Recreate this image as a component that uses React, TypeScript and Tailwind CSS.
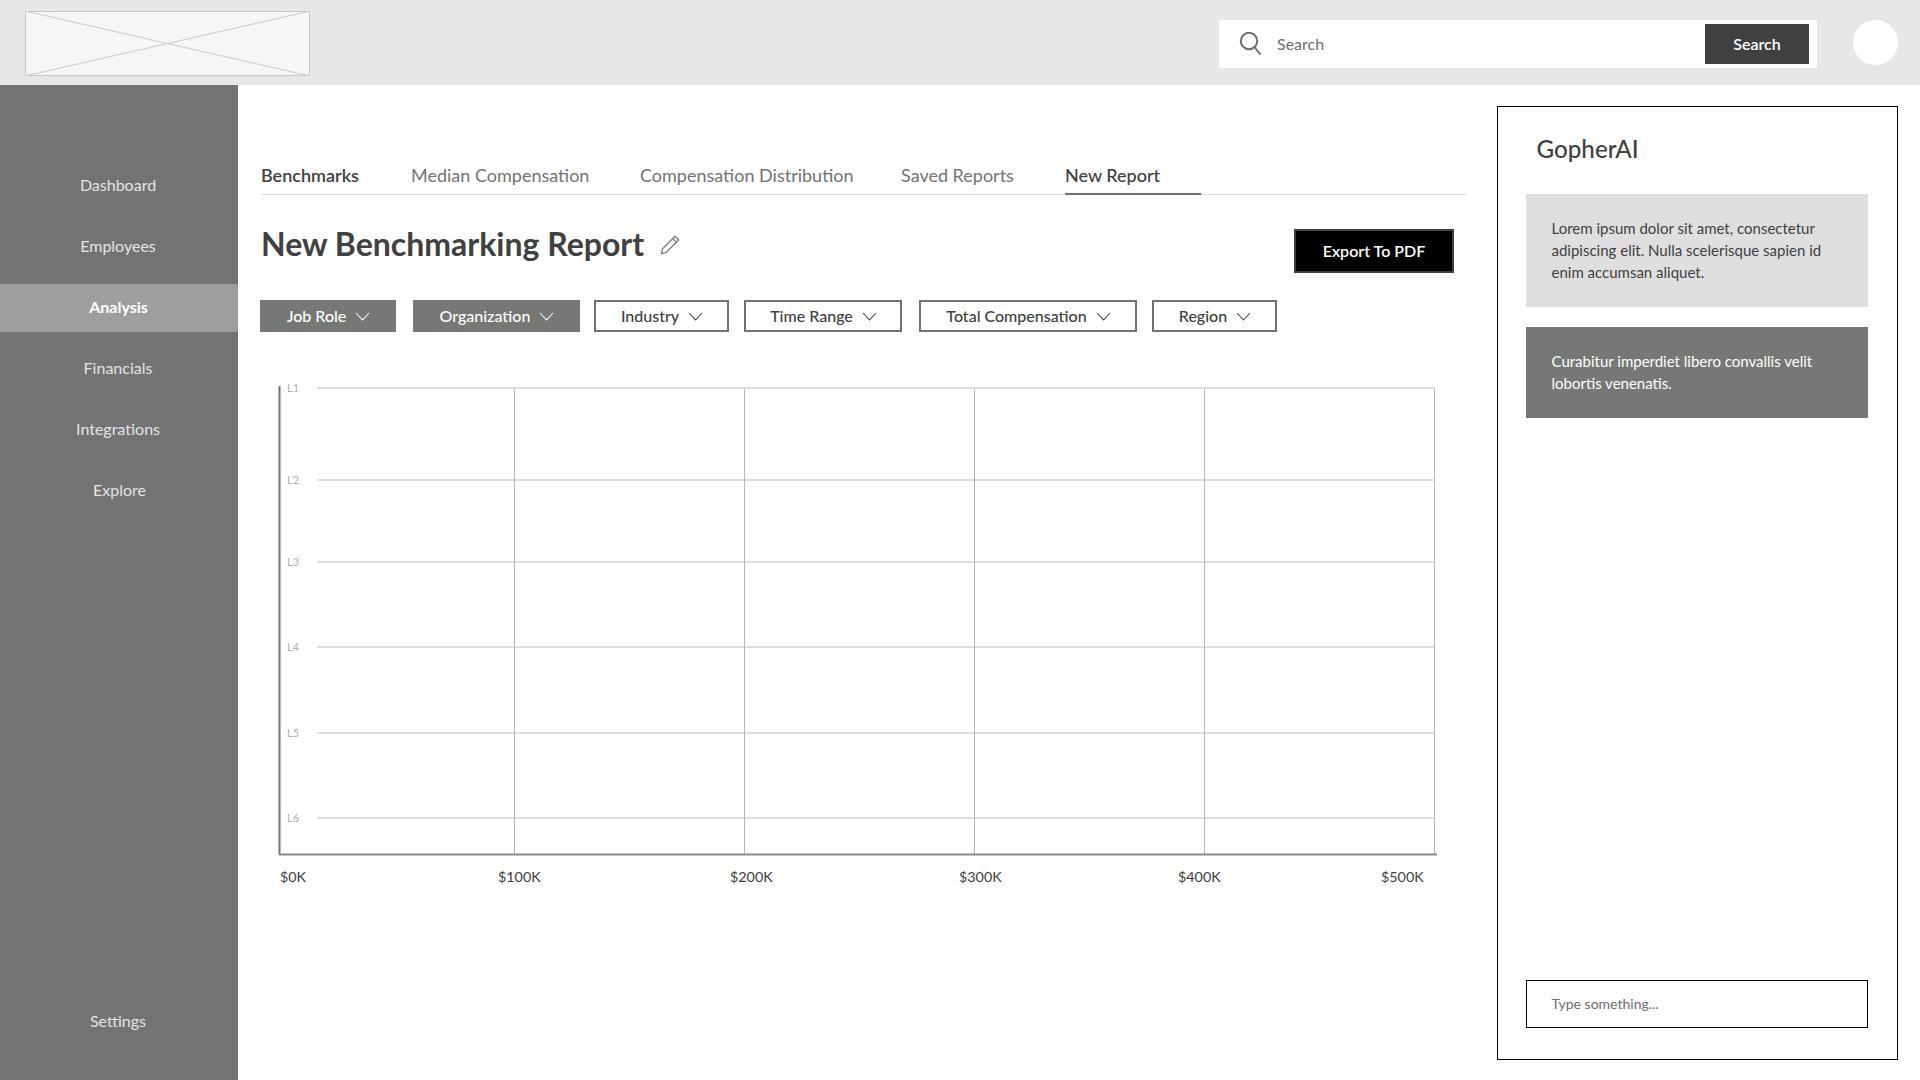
const navItems = ['Dashboard', 'Employees', 'Analysis', 'Financials', 'Integrations', 'Explore'];

const tabs = ['Benchmarks', 'Median Compensation', 'Compensation Distribution', 'Saved Reports', 'New Report'];

const filters = [
  { label: 'Job Role', width: 'w-[136px]', filled: true },
  { label: 'Organization', width: 'w-[167px] ml-[17px]', filled: true },
  { label: 'Industry', width: 'w-[135px] ml-[14px]', filled: false },
  { label: 'Time Range', width: 'w-[158px] ml-[15px]', filled: false },
  { label: 'Total Compensation', width: 'w-[218px] ml-[17px]', filled: false },
  { label: 'Region', width: 'w-[125px] ml-[15px]', filled: false },
];

const levels = [
  { label: 'L1', y: 48 },
  { label: 'L2', y: 140 },
  { label: 'L3', y: 222 },
  { label: 'L4', y: 307 },
  { label: 'L5', y: 393 },
  { label: 'L6', y: 478 },
];

const salaries = [
  { label: '$0K', x: 19 },
  { label: '$100K', x: 237 },
  { label: '$200K', x: 469 },
  { label: '$300K', x: 698 },
  { label: '$400K', x: 917 },
  { label: '$500K', x: 1120 },
];

const gridX = [253, 483, 713, 943, 1173];

const Chevron = () => (
  <svg width="15" height="9" viewBox="0 0 15 9" fill="none" stroke="currentColor" strokeWidth="1.1">
    <path d="M1 1 7.5 8 14 1" />
  </svg>
);

const Chart = () => (
  <svg width="1205" height="560" viewBox="0 0 1205 560" className="block mt-[8px]" style={{ fontFamily: 'Lato, sans-serif' }}>
    {gridX.map((x) => (
      <line key={x} x1={x + 0.5} y1="48" x2={x + 0.5} y2="514" stroke="#b5b5b5" strokeWidth="1" />
    ))}
    {levels.map((level, i) => (
      <g key={level.label}>
        <line x1="56" y1={level.y} x2="1174" y2={level.y} stroke={i === 0 ? '#dcdcdc' : '#bdbdbd'} strokeWidth={i === 0 ? 2 : 1.2} />
        <text x="26" y={level.y + 4} fontSize="11" fill="#b0b0b0">{level.label}</text>
      </g>
    ))}
    <line x1="18.5" y1="46" x2="18.5" y2="515" stroke="#737373" strokeWidth="2" />
    <line x1="18" y1="514.5" x2="1176" y2="514.5" stroke="#8a8a8a" strokeWidth="2" />
    {salaries.map((s) => (
      <text key={s.label} x={s.x} y="542" fontSize="14.3" fill="#404040">{s.label}</text>
    ))}
  </svg>
);

const App = () => {
  return (
    <div className="w-[1920px] h-[1080px] flex flex-col bg-white overflow-hidden font-['Lato',sans-serif] text-[#404040]">
      <header className="h-[85px] shrink-0 bg-[#e7e7e7] flex items-center">
        <svg width="285" height="65" viewBox="0 0 285 65" className="ml-[25px] mt-[2px]">
          <rect x="0.5" y="0.5" width="284" height="64" fill="#f6f6f6" stroke="#c8c8c8" />
          <line x1="0" y1="0" x2="285" y2="65" stroke="#c8c8c8" />
          <line x1="285" y1="0" x2="0" y2="65" stroke="#c8c8c8" />
        </svg>
        <div className="ml-auto w-[598px] h-[48px] mt-[3px] bg-white flex items-center pl-[20px] pr-[8px]">
          <svg width="24" height="24" viewBox="0 0 24 24" fill="none" stroke="#6e6e6e" strokeWidth="2" strokeLinecap="round">
            <circle cx="10" cy="9" r="8.2" />
            <line x1="15.5" y1="15" x2="21" y2="22" />
          </svg>
          <span className="ml-[14px] text-[16px] text-[#6e6e6e]">Search</span>
          <button className="ml-auto w-[104px] h-[40px] bg-[#404040] text-white text-[16px] font-semibold">Search</button>
        </div>
        <div className="ml-[36px] mr-[22px] w-[45px] h-[45px] rounded-full bg-white" />
      </header>

      <div className="flex-1 flex min-h-0">
        <aside className="w-[238px] shrink-0 bg-[#737373] flex flex-col pt-[76px] pb-[35px] text-[16px] text-[#e4e4e4]">
          <nav className="flex flex-col gap-[13px]">
            {navItems.map((item) => {
              if (item === 'Analysis')
                return <a key={item} className="h-[48px] mt-[1px] -mb-[1px] pr-[1px] pb-[2px] flex items-center justify-center bg-[#9e9e9e] text-white font-bold">{item}</a>;
              if (item === 'Explore')
                return <a key={item} className="h-[48px] pl-[1px] flex items-center justify-center">{item}</a>;
              return <a key={item} className="h-[48px] pr-[2px] flex items-center justify-center">{item}</a>;
            })}
          </nav>
          <a className="mt-auto h-[48px] pr-[2px] flex items-center justify-center">Settings</a>
        </aside>

        <main className="w-[1205px] ml-[23px] pt-[78px] shrink-0">
          <div className="h-[32px] flex border-b border-[#dcdcdc] text-[18px] text-[#737373] leading-[24px]">
            {tabs.map((tab) => {
              if (tab === 'Benchmarks') return <span key={tab} className="w-[150px] font-semibold text-[#404040]">{tab}</span>;
              if (tab === 'New Report')
                return <span key={tab} className="ml-[6px] h-[32px] w-[136px] border-b-2 border-[#737373] font-medium text-[#404040]">{tab}</span>;
              if (tab === 'Median Compensation') return <span key={tab} className="w-[229px]">{tab}</span>;
              if (tab === 'Saved Reports') return <span key={tab} className="w-[158px]">{tab}</span>;
              return <span key={tab} className="w-[261px]">{tab}</span>;
            })}
          </div>

          <div className="flex items-start justify-between pr-[12px] h-[105px]">
            <div className="flex items-center mt-[28px] h-[42px]">
              <h1 className="text-[32px] font-bold leading-[42px] text-[#404040]">New Benchmarking Report</h1>
              <svg width="22" height="22" viewBox="0 0 24 24" fill="none" stroke="#808080" strokeWidth="1.5" strokeLinejoin="round" className="ml-[15px] mt-[1px]">
                <path d="M17.5 2.5 21.5 6.5 8 20 2.5 21.5 4 16Z" />
                <path d="M15 5 19 9" />
              </svg>
            </div>
            <button className="mt-[34px] w-[160px] h-[44px] bg-black border-2 border-[#404040] text-white text-[16px] font-semibold">Export To PDF</button>
          </div>

          <div className="flex -ml-[1px] text-[16px]">
            {filters.map((f) => (
              <button
                key={f.label}
                className={
                  f.filled
                    ? `${f.width} h-[32px] pl-[1px] flex items-center justify-center gap-[9px] bg-[#757875] text-white font-medium`
                    : `${f.width} h-[32px] pl-[1px] flex items-center justify-center gap-[9px] border-2 border-[#737373] text-[#404040] font-medium`
                }
              >
                {f.label}
                <Chevron />
              </button>
            ))}
          </div>

          <Chart />
        </main>

        <aside className="w-[401px] ml-[31px] mt-[21px] mb-[20px] border-[1.5px] border-black flex flex-col pl-[27.5px] pr-[29px] shrink-0">
          <h2 className="ml-[11px] mt-[24px] text-[24.2px] leading-[36px] font-medium text-[#404040]">GopherAI</h2>
          <div className="mt-[27px] h-[113px] bg-[#dfdfdf] pl-[26px] pr-[20px] pt-[23px] text-[15px] leading-[22px]">
            Lorem ipsum dolor sit amet, consectetur adipiscing elit. Nulla scelerisque sapien id enim accumsan aliquet.
          </div>
          <div className="mt-[20px] h-[91px] bg-[#757875] pl-[26px] pr-[20px] pt-[23px] text-[15px] leading-[22px] text-white">
            Curabitur imperdiet libero convallis velit lobortis venenatis.
          </div>
          <div className="mt-auto mb-[31px] h-[48px] border-[1.5px] border-black flex items-center pl-[25px] pb-[2px] text-[14px] text-[#6e6e6e]">
            Type something...
          </div>
        </aside>
      </div>
    </div>
  );
};

export default App;
